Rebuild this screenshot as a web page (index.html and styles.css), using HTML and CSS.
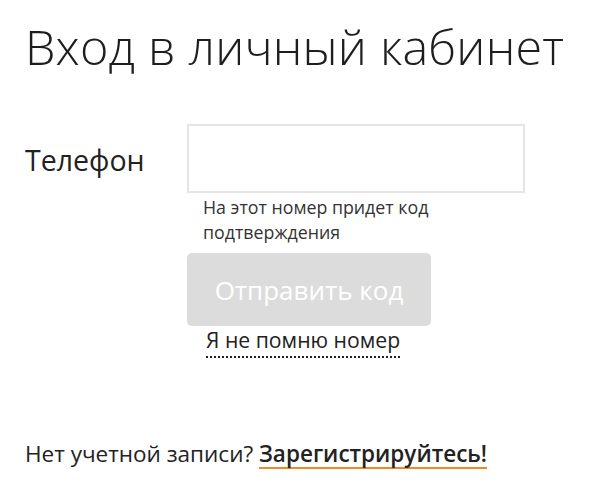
FILE: index.html
```html
<!DOCTYPE html>
<html lang="ru">
<head>
<meta charset="utf-8">
<link rel="stylesheet" href="styles.css">
</head>
<body>
<main class="page">
  <h1 class="title">Вход в личный кабинет</h1>
  <form class="form">
    <label class="label" for="phone">Телефон</label>
    <div class="field">
      <input class="input" id="phone" type="tel">
      <p class="hint">На этот номер придет код подтверждения</p>
      <button class="btn" type="button">Отправить код</button>
      <a class="forgot" href="#">Я не помню номер</a>
    </div>
  </form>
  <p class="signup">Нет учетной записи? <a class="signup-link" href="#">Зарегистрируйтесь!</a></p>
</main>
</body>
</html>
```

FILE: styles.css
```css
html, body {
  margin: 0;
  padding: 0;
  background: #fff;
}
body {
  font-family: "Open Sans", "Noto Sans", sans-serif;
  color: #222;
}
.page {
  padding: 16px 0 0 25px;
}
.title {
  margin: 0;
  font-size: 48.5px;
  font-weight: 300;
  line-height: 60px;
  color: #1e1e1e;
  letter-spacing: 0.2px;
}
.form {
  display: grid;
  grid-template-columns: 162px 338px;
  margin-top: 48px;
}
.label {
  font-size: 28.5px;
  line-height: 36px;
  padding-top: 18px;
  color: #222;
}
.field {
  display: flex;
  flex-direction: column;
  align-items: flex-start;
}
.input {
  box-sizing: border-box;
  width: 338px;
  height: 69px;
  border: 2px solid #e4e4e4;
  margin: 0;
  outline: none;
}
.hint {
  margin: 2px 0 0 16px;
  width: 280px;
  font-size: 17.8px;
  line-height: 25px;
  color: #333;
}
.btn {
  margin-top: 8px;
  width: 244px;
  height: 73px;
  border: none;
  border-radius: 5px;
  background: #dcdcdc;
  color: #fff;
  font-family: inherit;
  font-size: 26px;
}
.forgot {
  margin: 0 0 0 19px;
  padding-bottom: 2px;
  font-size: 21.2px;
  line-height: 28px;
  color: #222;
  text-decoration: none;
  border-bottom: 2px dotted #222;
}
.signup {
  margin: 82px 0 0;
  font-size: 22.5px;
  line-height: 28px;
  color: #222;
}
.signup-link {
  display: inline-block;
  line-height: 26px;
  color: #222;
  font-weight: 600;
  text-decoration: none;
  border-bottom: 2px solid #f08a24;
}
```
